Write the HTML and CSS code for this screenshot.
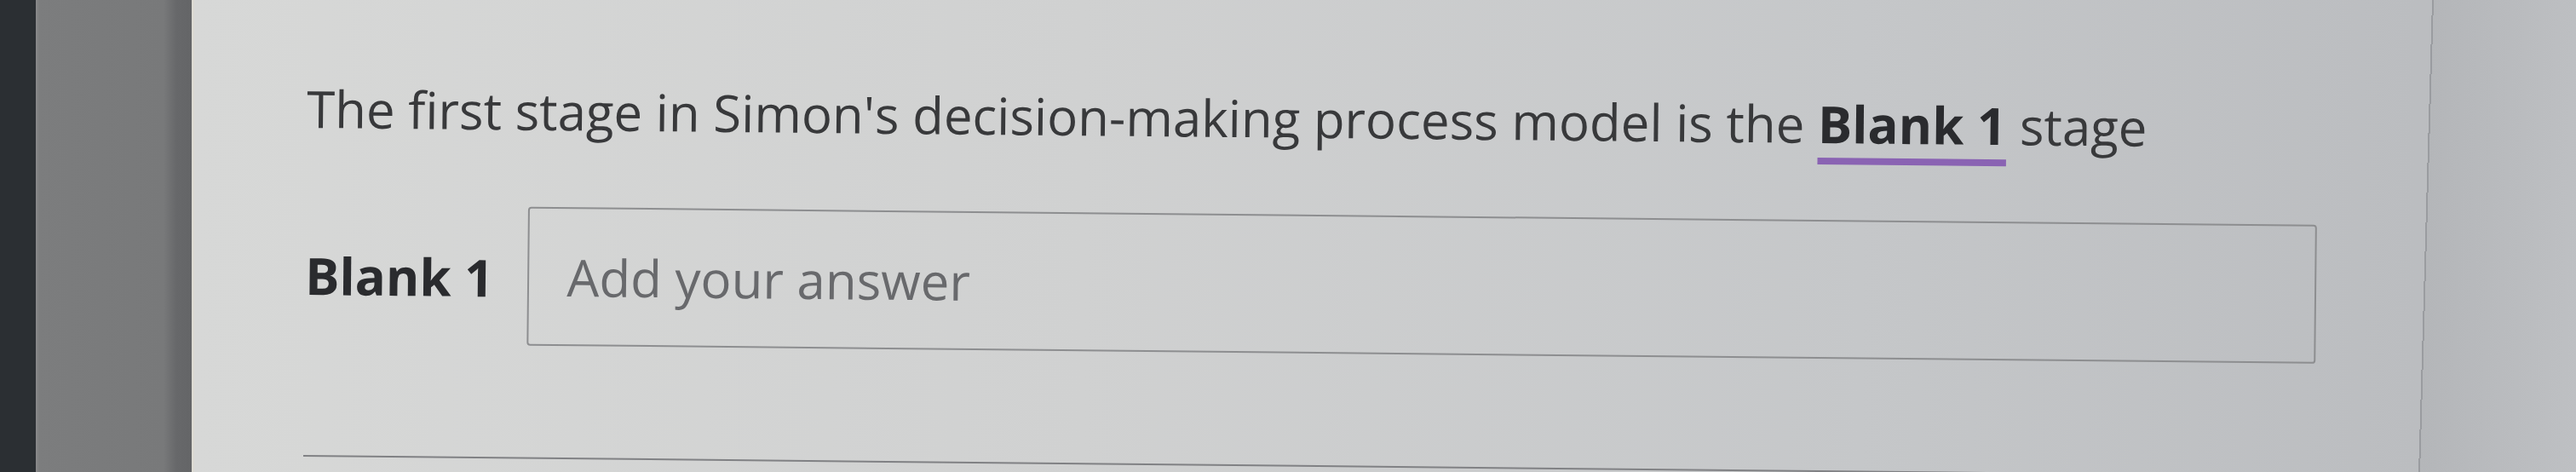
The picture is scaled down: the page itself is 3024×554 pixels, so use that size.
FILE: index.html
```html
<!DOCTYPE html>
<html lang="en">
<head>
    <meta charset="UTF-8">
    <meta name="viewport" content="width=device-width, initial-scale=1.0">
    <title>Fill in the blank</title>
    <link rel="stylesheet" href="styles.css">
</head>
<body>
    <div class="rail"></div>
    <div class="sidebar"></div>
    <div class="edge"></div>

    <div class="page">
        <div class="content">
            <p class="question">The first stage in Simon's decision-making process model is the <span class="blank-ref">Blank 1</span> stage</p>

            <div class="blank-row">
                <span class="blank-label">Blank 1</span>
                <div class="answer"><span class="placeholder">Add your answer</span></div>
            </div>

            <div class="rule"></div>
        </div>
    </div>

    <div class="outer"></div>
</body>
</html>
```

FILE: styles.css
```css
body {
    margin: 0;
    height: 554px;
    display: flex;
    overflow: hidden;
    background-color: #b5b7ba;
    font-family: "Open Sans", "Noto Sans", sans-serif;
}

.rail {
    width: 42px;
    flex: none;
    background-color: #2b2f33;
}
.sidebar {
    width: 183px;
    flex: none;
    background: linear-gradient(to right, #8a8b8c 0, #7c7d7e 4px, #78797a 150px, #67686a 165px, #646567 100%);
}
.edge {
    width: 3px;
    flex: none;
    background-color: #dcdad3;
}

/* photo of the screen is a little tilted, so the content is turned a hair */
.page {
    flex: 1;
    padding: 87px 117px 0 130px;
    background: linear-gradient(to right, #d7d8d7 0, #d0d1d1 40%, #c5c7c9 75%, #bbbdc0 100%);
    color: #38393b;
}
.content {
    transform: rotate(0.58deg);
    transform-origin: 0 250px;
}

.question {
    margin: 0;
    font-size: 60px;
    line-height: 80px;
    white-space: nowrap;
}
.blank-ref {
    font-weight: 700;
    color: #2a2b2e;
    text-decoration: underline;
    text-decoration-color: #8a63b3;
    text-decoration-thickness: 8px;
    text-underline-offset: 17px;
}

.blank-row {
    display: flex;
    align-items: center;
    gap: 40px;
    margin-top: 73px;
}
.blank-label {
    font-size: 60px;
    font-weight: 700;
    color: #2a2b2e;
    white-space: nowrap;
    padding-top: 3px;
}
.answer {
    flex: 1;
    height: 163px;
    box-sizing: border-box;
    border: 2px solid #8d8e90;
    border-radius: 4px;
    padding-left: 44px;
    display: flex;
    align-items: center;
}
.placeholder {
    font-size: 60px;
    color: #68696c;
}

.rule {
    margin-top: 131px;
    margin-right: 8px;
    height: 2px;
    background-color: #808184;
}

.outer {
    width: 188px;
    flex: none;
    background: linear-gradient(91.65deg, #bbbdc0 0, #bbbdc0 19px, #9a9ca0 19px, #9a9ca0 21px, #b4b6b9 21px, #bec0c3 100%);
}
```
